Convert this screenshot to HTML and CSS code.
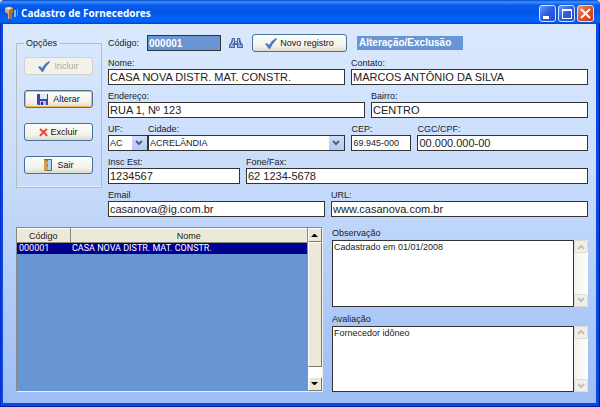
FILE: index.html
```html
<!DOCTYPE html>
<html lang="pt-BR">
<head>
<meta charset="utf-8">
<title>Cadastro de Fornecedores</title>
<link rel="stylesheet" href="styles.css">
</head>
<body>
<div class="window">
  <header class="titlebar">
    <svg class="app-icon" width="14" height="12" viewBox="0 0 14 12" aria-hidden="true">
      <path d="M0 1l4-1 4 1v4l-1 1v5l-4 1V7L0 5z" fill="#d9a866"/>
      <path d="M0 1l4-1 4 1-4 2z" fill="#f6dfae"/>
      <path d="M4 3l4-2v4l-1 1v5l-3 1z" fill="#a9743c"/>
      <path d="M9 3h2v7H9z" fill="#8fb4dc"/><path d="M12 2h1v7h-1z" fill="#5c9af0"/>
    </svg>
    <h1>Cadastro de Fornecedores</h1>
    <button class="win-btn" type="button" aria-label="Minimizar"><svg width="17" height="17" viewBox="0 0 17 17"><path d="M4 11h6v3H4z" fill="#fff"/></svg></button>
    <button class="win-btn" type="button" aria-label="Maximizar"><svg width="17" height="17" viewBox="0 0 17 17"><path d="M4 4h10v10H4zM5 6v7h8V6z" fill="#fff" fill-rule="evenodd"/></svg></button>
    <button class="win-btn close" type="button" aria-label="Fechar"><svg width="17" height="17" viewBox="0 0 17 17"><path d="M4 4l9 9M13 4l-9 9" stroke="#fff" stroke-width="2"/></svg></button>
  </header>

  <main class="content">
    <section class="top">
      <fieldset class="options">
        <legend>Opções</legend>
        <button class="btn" type="button" disabled>
          <svg width="12" height="11" viewBox="0 0 12 11"><path d="M0 6l2-1 2 2q3-5 7-7l1 1Q8 5 5 11H4z" fill="#4a78d0"/></svg>Incluir</button>
        <button class="btn default" type="button">
          <svg width="12" height="12" viewBox="0 0 12 12"><path d="M0 1h11v11H1l-1-1z" fill="#3846b0"/><path d="M3 1h7v5H3z" fill="#dfe8fa"/><path d="M3 8h6v4H3z" fill="#b9c3de"/><path d="M4 9h2v3H4z" fill="#252f80"/></svg>Alterar</button>
        <button class="btn tight" type="button">
          <svg width="9" height="9" viewBox="0 0 9 9"><path d="M1 1q4 3 7 7M8 1Q4 4 1 8" stroke="#e2472c" stroke-width="2" fill="none"/></svg>Excluir</button>
        <button class="btn" type="button">
          <svg width="10" height="12" viewBox="0 0 10 12"><path d="M1 0h8v12H1z" fill="#7a6552"/><path d="M5 1h3v10H5z" fill="#a9d8f4"/><path d="M1 1l4 1v9l-4 1z" fill="#d99b50"/><path d="M4 6h1v1H4z" fill="#6b3d16"/></svg>Sair</button>
      </fieldset>

      <form class="form">
        <div class="row first">
          <label for="codigo">Código:</label>
          <input id="codigo" class="code" type="text" value="000001">
          <button class="find" type="button" aria-label="Localizar">
            <svg width="14" height="12" viewBox="0 0 14 12"><path d="M3 1h3v3h2V1h3l1 4 2 3v3H8V8H6v3H0V8l2-3z" fill="#4a68a8"/><path d="M1 8h4v2H1zM9 8h4v2H9z" fill="#8fabdc"/><path d="M4 2h1v3L3 8H2l2-4zM9 2h1v3l1 3h-1L9 5z" fill="#b9d0f2"/><path d="M6 5h2v1H6z" fill="#dce9fb"/></svg>
          </button>
          <button class="btn new" type="button">
            <svg width="12" height="11" viewBox="0 0 12 11"><path d="M0 6l2-1 2 2q3-5 7-7l1 1Q8 5 5 11H4z" fill="#4a78d0"/></svg>Novo registro</button>
          <output class="mode">Alteração/Exclusão</output>
        </div>
        <div class="row r-nome">
          <div class="field"><label for="nome">Nome:</label><input id="nome" type="text" value="CASA NOVA DISTR. MAT. CONSTR."></div>
          <div class="field"><label for="contato">Contato:</label><input id="contato" type="text" value="MARCOS ANTÔNIO DA SILVA"></div>
        </div>
        <div class="row r-end">
          <div class="field"><label for="endereco">Endereço:</label><input id="endereco" type="text" value="RUA 1, Nº 123"></div>
          <div class="field"><label for="bairro">Bairro:</label><input id="bairro" type="text" value="CENTRO"></div>
        </div>
        <div class="row r-cid">
          <div class="field"><label for="uf">UF:</label>
            <div class="combo"><select id="uf"><option>AC</option></select><span class="arrow"><svg width="9" height="6" viewBox="0 0 9 6"><path d="M1 1l3 3 3-3" fill="none" stroke="#4d6185" stroke-width="2"/></svg></span></div></div>
          <div class="field"><label for="cidade">Cidade:</label>
            <div class="combo"><select id="cidade"><option>ACRELÂNDIA</option></select><span class="arrow"><svg width="9" height="6" viewBox="0 0 9 6"><path d="M1 1l3 3 3-3" fill="none" stroke="#4d6185" stroke-width="2"/></svg></span></div></div>
          <div class="field gap"><label for="cep">CEP:</label><input id="cep" class="small" type="text" value="69.945-000"></div>
          <div class="field gap"><label for="cgc">CGC/CPF:</label><input id="cgc" type="text" value="00.000.000-00"></div>
        </div>
        <div class="row r-insc">
          <div class="field"><label for="insc">Insc Est:</label><input id="insc" type="text" value="1234567"></div>
          <div class="field"><label for="fone">Fone/Fax:</label><input id="fone" type="text" value="62 1234-5678"></div>
        </div>
        <div class="row r-mail">
          <div class="field"><label for="email">Email</label><input id="email" type="text" value="casanova@ig.com.br"></div>
          <div class="field"><label for="url">URL:</label><input id="url" type="text" value="www.casanova.com.br"></div>
        </div>
      </form>
    </section>

    <section class="bottom">
      <div class="list">
        <table>
          <thead><tr><th class="col-code">Código</th><th>Nome</th></tr></thead>
          <tbody><tr><td>000001</td><td>CASA NOVA DISTR. MAT. CONSTR.</td></tr></tbody>
        </table>
        <div class="bar">
          <span class="bar-btn"><svg width="7" height="4" viewBox="0 0 7 4"><path d="M0 4l3-3h1l3 3z" fill="#000"/></svg></span>
          <span class="bar-thumb"></span>
          <span class="bar-gap"></span>
          <span class="bar-btn"><svg width="7" height="4" viewBox="0 0 7 4"><path d="M0 0h7L4 3H3z" fill="#000"/></svg></span>
        </div>
      </div>
      <div class="notes">
        <label for="obs">Observação</label>
        <div class="memo">
          <textarea id="obs">Cadastrado em 01/01/2008</textarea>
          <div class="memo-bar"><span><svg width="8" height="6" viewBox="0 0 8 6"><path d="M1 5l3-3 3 3" fill="none" stroke="#c4c2b8" stroke-width="2"/></svg></span><span><svg width="8" height="6" viewBox="0 0 8 6"><path d="M1 1l3 3 3-3" fill="none" stroke="#c4c2b8" stroke-width="2"/></svg></span></div>
        </div>
        <label for="aval">Avaliação</label>
        <div class="memo">
          <textarea id="aval">Fornecedor idôneo</textarea>
          <div class="memo-bar"><span><svg width="8" height="6" viewBox="0 0 8 6"><path d="M1 5l3-3 3 3" fill="none" stroke="#c4c2b8" stroke-width="2"/></svg></span><span><svg width="8" height="6" viewBox="0 0 8 6"><path d="M1 1l3 3 3-3" fill="none" stroke="#c4c2b8" stroke-width="2"/></svg></span></div>
        </div>
      </div>
    </section>
  </main>
</div>
</body>
</html>
```
FILE: styles.css
```css
* { box-sizing: border-box; }

body {
  margin: 0;
  background: #cfd6e0;
  color: #222;
  font: 9px/12px "Liberation Sans", Arial, sans-serif;
}

input, select, textarea, button { font: inherit; color: inherit; margin: 0; }
svg { display: block; flex: none; }

.window {
  display: flex;
  flex-direction: column;
  min-height: 100vh;
  padding: 0 4px 4px 3px;
  border-radius: 5px 5px 0 0;
  background: #0a48e4;
  box-shadow: inset -1px -1px 0 #001c9c, inset 1px 0 0 #0630c8;
}

.titlebar {
  display: flex;
  align-items: center;
  gap: 2px;
  height: 24px;
  margin: 0 -4px 0 -3px;
  padding: 2px 6px 0 5px;
  border-radius: 5px 5px 0 0;
  background: linear-gradient(#0848cc 0, #3a94ff 2px, #0a5cec 5px, #0054e4 12px, #0064fc 19px, #0060f4 22px, #0040c0 24px);
}

.titlebar h1 {
  flex: 1;
  margin: 0;
  color: #fff;
  font: bold 10px/16px "Noto Sans", sans-serif;
}

.win-btn {
  width: 17px;
  height: 17px;
  padding: 0;
  border: 1px solid #d4e2fc;
  border-radius: 3px;
  background: linear-gradient(135deg, #6c98f4, #2c5ce0 50%, #2450d0);
}

.win-btn svg { margin: -1px; }
.win-btn.close { background: linear-gradient(135deg, #ec9070, #e0502c 50%, #c83c14); }

.content {
  display: flex;
  flex-direction: column;
  flex: 1;
  gap: 10px;
  padding: 10px 8px 11px 13px;
  background: linear-gradient(#dae9fd, #c8dcfb 40%, #9dbdf4);
}

.top { display: flex; gap: 6px; }

.options {
  display: flex;
  flex-direction: column;
  gap: 15px;
  width: 86px;
  height: 151px;
  margin: 3px 0 0;
  padding: 8px 8px 0 7px;
  border: 1px solid #b6bcc6;
  box-shadow: inset 0 -1px 0 #e4edf8;
}

.options legend { margin: 0; padding: 0 3px 0 2px; }

.btn {
  display: flex;
  align-items: center;
  justify-content: center;
  gap: 4px;
  width: 100%;
  height: 18px;
  padding: 0;
  border: 1px solid #4c7098;
  border-radius: 3px;
  background: linear-gradient(#fdfdfb, #f2f1ea 70%, #dedacb);
  color: #111;
}

.btn.tight { gap: 2px; }
.btn.default { border-color: #5a6c84; box-shadow: inset 0 0 0 1px #f4b850; }
.btn:disabled { border-color: #d0d2cc; background: #f2f1ea; color: #b0ae9e; }
.btn.new { width: 95px; gap: 3px; }

.form {
  display: flex;
  flex: 1;
  flex-direction: column;
  gap: 5px;
}

.row { display: grid; column-gap: 6px; }
.row.first { display: flex; align-items: center; gap: 0; }
.first label { width: 39px; }
.r-nome { grid-template-columns: 237fr 237fr; }
.r-end { grid-template-columns: 257fr 217fr; }
.r-cid { grid-template-columns: 40px 198fr 66px 177fr; column-gap: 0; }
.r-insc { grid-template-columns: 132fr 342fr; }
.r-mail { grid-template-columns: 217fr 257fr; }

.field { display: flex; flex-direction: column; min-width: 0; }
.field.gap { padding-left: 6px; }

input {
  width: 100%;
  min-width: 0;
  height: 16px;
  padding: 0 1px;
  border: 1px solid #333;
  border-radius: 0;
  background: #fff;
  font-size: 11px;
}

input.small { font-size: 9px; }

input.code {
  width: 74px;
  background: #6896d4;
  color: #fff;
  font-size: 10px;
  font-weight: bold;
}

.find {
  margin: 0 9px 0 8px;
  padding: 0;
  border: 0;
  background: none;
}

.mode {
  width: 106px;
  height: 14px;
  margin-left: 10px;
  padding-left: 2px;
  background: #6896d4;
  color: #fff;
  font-size: 10px;
  font-weight: bold;
  line-height: 14px;
}

.combo {
  display: flex;
  height: 16px;
  border: 1px solid #333;
  background: #fff;
}

.combo select {
  flex: 1;
  min-width: 0;
  padding: 0 1px;
  border: 0;
  appearance: none;
  background: none;
}

.arrow {
  display: grid;
  place-items: center;
  width: 15px;
  background: linear-gradient(#cfdcfc, #b4c8f4);
}

.bottom { display: flex; flex: 1; gap: 9px; }

.list {
  display: flex;
  flex: 306;
  align-items: flex-start;
  min-width: 0;
  border: 1px solid #8c8a80;
  border-right-color: #f0efe8;
  border-bottom-color: #f0efe8;
  background: #6896d4;
}

.list table {
  flex: 1;
  border-collapse: collapse;
  table-layout: fixed;
}

.list th {
  height: 14px;
  padding: 0;
  border: 1px solid #8c8a80;
  border-top-color: #fff;
  border-left-width: 0;
  background: #ece9d8;
  font-weight: normal;
}

.col-code { width: 53px; }

.list td {
  height: 11px;
  padding: 0 2px;
  background: #000090;
  color: #fff;
  font: 9px/11px Roboto, sans-serif;
}

.bar {
  display: flex;
  flex-direction: column;
  align-self: stretch;
  width: 14px;
}

.bar-btn, .bar-thumb {
  display: grid;
  place-items: center;
  border: 1px solid #fff;
  border-right-color: #7c7a70;
  border-bottom-color: #7c7a70;
  background: #ece9d8;
}

.bar-btn { height: 14px; }
.bar-thumb { flex: 1; }
.bar-gap { height: 10px; background: #fff; }

.notes { display: flex; flex: 257; flex-direction: column; min-width: 0; }
.notes label { line-height: 13px; }
.memo { display: flex; flex: 1; }
.memo + label { margin-top: 6px; }

.memo textarea {
  flex: 1;
  min-width: 0;
  height: auto;
  padding: 0 1px;
  border: 1px solid #333;
  border-radius: 0;
  background: #fff;
  resize: none;
  overflow: hidden;
}

.memo-bar {
  display: flex;
  flex-direction: column;
  justify-content: space-between;
  width: 14px;
  background: linear-gradient(90deg, #f2f1ea, #fefefc);
}

.memo-bar span {
  display: grid;
  place-items: center;
  height: 13px;
  border: 1px solid #dddcd2;
  border-radius: 2px;
  background: #f0efe8;
}
```
